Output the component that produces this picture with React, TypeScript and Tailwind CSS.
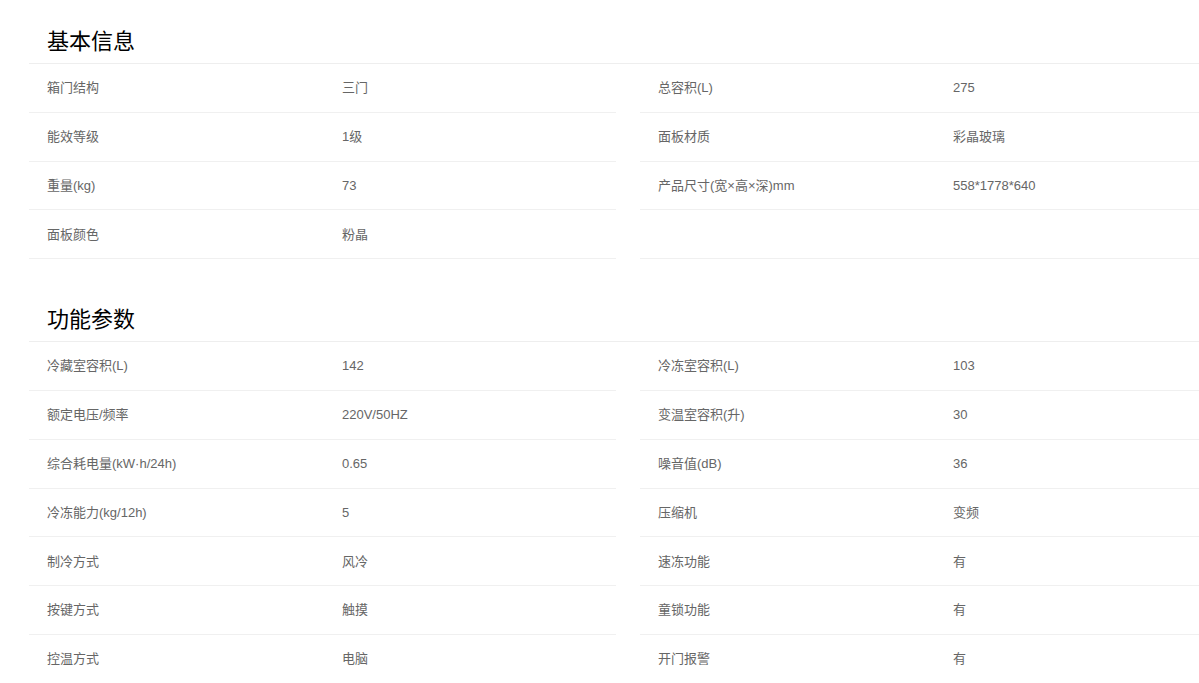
const basic: [string, string][] = [
  ["箱门结构", "三门"],
  ["总容积(L)", "275"],
  ["能效等级", "1级"],
  ["面板材质", "彩晶玻璃"],
  ["重量(kg)", "73"],
  ["产品尺寸(宽×高×深)mm", "558*1778*640"],
  ["面板颜色", "粉晶"],
  ["", ""],
];

const features: [string, string][] = [
  ["冷藏室容积(L)", "142"],
  ["冷冻室容积(L)", "103"],
  ["额定电压/频率", "220V/50HZ"],
  ["变温室容积(升)", "30"],
  ["综合耗电量(kW·h/24h)", "0.65"],
  ["噪音值(dB)", "36"],
  ["冷冻能力(kg/12h)", "5"],
  ["压缩机", "变频"],
  ["制冷方式", "风冷"],
  ["速冻功能", "有"],
  ["按键方式", "触摸"],
  ["童锁功能", "有"],
  ["控温方式", "电脑"],
  ["开门报警", "有"],
];

function Section({ title, rows }: { title: string; rows: [string, string][] }) {
  return (
    <div>
      <div className="h-[64px] border-b border-[#eeeeee] flex items-end pl-[18px] pb-[10px]">
        <h2 className="text-[22px] text-black leading-none">{title}</h2>
      </div>
      <div className="grid grid-cols-[587px_587px] gap-x-6">
        {rows.map(([label, value], i) => (
          <div
            key={i}
            className="h-[48.8px] border-b border-[#f0f0f0] flex items-center pl-[18px] text-[13px] text-[#666666]"
          >
            <span className="w-[295px] shrink-0">{label}</span>
            <span>{value}</span>
          </div>
        ))}
      </div>
    </div>
  );
}

export default function App() {
  return (
    <div
      className="w-[1199px] h-[683px] overflow-hidden bg-white pl-[29px]"
      style={{ fontFamily: '"Liberation Sans", "Noto Sans CJK SC", sans-serif' }}
    >
      <div className="w-[1200px]">
        <Section title="基本信息" rows={basic} />
        <div className="mt-[19px]">
          <Section title="功能参数" rows={features} />
        </div>
      </div>
    </div>
  );
}
